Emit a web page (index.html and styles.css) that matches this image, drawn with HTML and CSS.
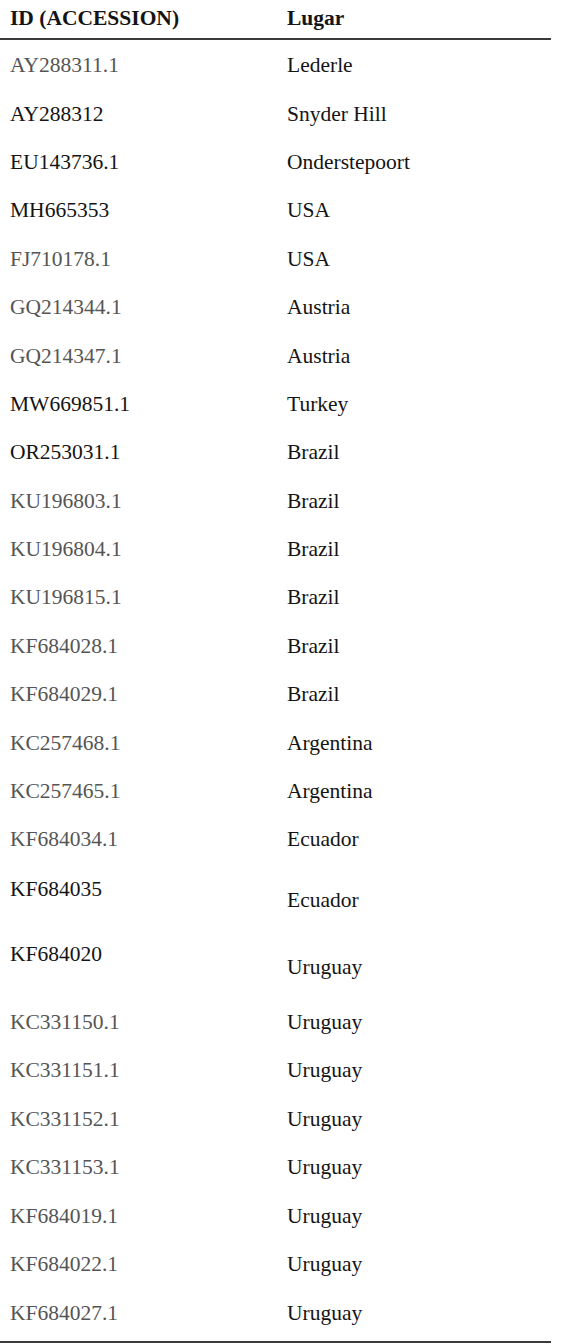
FILE: index.html
```html
<!DOCTYPE html>
<html lang="es">
<head>
<meta charset="utf-8">
<title>Tabla</title>
<link rel="stylesheet" href="styles.css">
</head>
<body>
<div class="table">
  <div class="head">
    <div class="c1">ID (ACCESSION)</div>
    <div class="c2">Lugar</div>
  </div>
  <div class="body">
    <div class="row"><div class="c1 gray">AY288311.1</div><div class="c2">Lederle</div></div>
    <div class="row"><div class="c1">AY288312</div><div class="c2">Snyder Hill</div></div>
    <div class="row"><div class="c1">EU143736.1</div><div class="c2">Onderstepoort</div></div>
    <div class="row"><div class="c1">MH665353</div><div class="c2">USA</div></div>
    <div class="row"><div class="c1 gray">FJ710178.1</div><div class="c2">USA</div></div>
    <div class="row"><div class="c1 gray">GQ214344.1</div><div class="c2">Austria</div></div>
    <div class="row"><div class="c1 gray">GQ214347.1</div><div class="c2">Austria</div></div>
    <div class="row"><div class="c1">MW669851.1</div><div class="c2">Turkey</div></div>
    <div class="row"><div class="c1">OR253031.1</div><div class="c2">Brazil</div></div>
    <div class="row"><div class="c1 gray">KU196803.1</div><div class="c2">Brazil</div></div>
    <div class="row"><div class="c1 gray">KU196804.1</div><div class="c2">Brazil</div></div>
    <div class="row"><div class="c1 gray">KU196815.1</div><div class="c2">Brazil</div></div>
    <div class="row"><div class="c1 gray">KF684028.1</div><div class="c2">Brazil</div></div>
    <div class="row"><div class="c1 gray">KF684029.1</div><div class="c2">Brazil</div></div>
    <div class="row"><div class="c1 gray">KC257468.1</div><div class="c2">Argentina</div></div>
    <div class="row"><div class="c1 gray">KC257465.1</div><div class="c2">Argentina</div></div>
    <div class="row"><div class="c1 gray">KF684034.1</div><div class="c2">Ecuador</div></div>
    <div class="row tall-a"><div class="c1 top">KF684035</div><div class="c2">Ecuador</div></div>
    <div class="row tall-b"><div class="c1 top">KF684020</div><div class="c2">Uruguay</div></div>
    <div class="row r2"><div class="c1 gray">KC331150.1</div><div class="c2">Uruguay</div></div>
    <div class="row r2"><div class="c1 gray">KC331151.1</div><div class="c2">Uruguay</div></div>
    <div class="row r2"><div class="c1 gray">KC331152.1</div><div class="c2">Uruguay</div></div>
    <div class="row r2"><div class="c1 gray">KC331153.1</div><div class="c2">Uruguay</div></div>
    <div class="row r2"><div class="c1 gray">KF684019.1</div><div class="c2">Uruguay</div></div>
    <div class="row r2"><div class="c1 gray">KF684022.1</div><div class="c2">Uruguay</div></div>
    <div class="row r2"><div class="c1 gray">KF684027.1</div><div class="c2">Uruguay</div></div>
  </div>
</div>
</body>
</html>
```

FILE: styles.css
```css
html, body {
  margin: 0;
  padding: 0;
  background: #ffffff;
}

body {
  font-family: "Liberation Serif", "Times New Roman", serif;
  font-size: 21.5px;
  color: #141414;
}

.table {
  width: 551px;
}

.head {
  display: grid;
  grid-template-columns: 277px 1fr;
  height: 40px;
  box-sizing: border-box;
  padding-top: 6px;
  line-height: 24px;
  font-weight: bold;
  border-bottom: 2px solid #3a3a3a;
}

.body {
  padding-bottom: 5px;
  border-bottom: 2px solid #3a3a3a;
}

.row {
  display: grid;
  grid-template-columns: 277px 1fr;
  align-items: center;
  height: 48.4px;
  line-height: 24px;
  padding-top: 2px;
  box-sizing: border-box;
}

.r2 {
  height: 48.5px;
}

.c1 {
  padding-left: 10px;
}

.c2 {
  padding-left: 10px;
}

.gray {
  color: #555555;
}

.tall-a {
  height: 72px;
}

.tall-b {
  height: 62px;
}

.top {
  align-self: start;
}

.tall-a .top {
  padding-top: 12px;
}

.tall-b .top {
  padding-top: 5px;
}
```
